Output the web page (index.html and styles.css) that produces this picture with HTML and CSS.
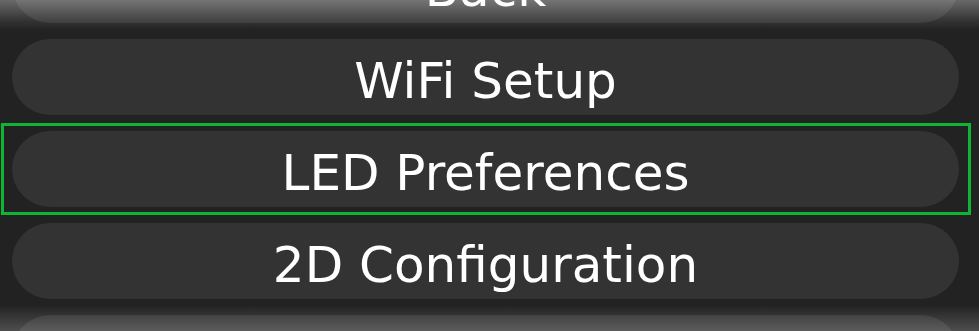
FILE: index.html
```html
<!DOCTYPE html>
<html>
<head>
<meta charset="utf-8">
<link rel="stylesheet" href="styles.css">
</head>
<body>
<div class="viewport">
  <ul class="menu">
    <li class="item"><div class="pill">Back</div></li>
    <li class="item"><div class="pill">WiFi Setup</div></li>
    <li class="item focused"><div class="pill">LED Preferences</div></li>
    <li class="item"><div class="pill">2D Configuration</div></li>
    <li class="item"><div class="pill">About</div></li>
  </ul>
  <div class="fade fade-top"></div>
  <div class="fade fade-bottom"></div>
</div>
</body>
</html>
```

FILE: styles.css
```css
html, body {
  margin: 0;
  padding: 0;
  background: #222222;
}

.viewport {
  position: relative;
  width: 979px;
  height: 331px;
  overflow: hidden;
  background: #222222;
}

.menu {
  list-style: none;
  margin: -61px 0 0 1px;
  padding: 0;
  width: 970px;
  display: flex;
  flex-direction: column;
}

.item {
  box-sizing: border-box;
  height: 92px;
  padding: 8px 12px 8px 11px;
  display: flex;
}

.item.focused {
  outline: 3px solid #0db533;
  outline-offset: -3px;
}

.pill {
  flex: 1;
  box-sizing: border-box;
  height: 76px;
  padding-top: 7px;
  border-radius: 38px;
  background: #333333;
  color: #ffffff;
  font-family: "DejaVu Sans", Verdana, sans-serif;
  font-size: 50px;
  display: flex;
  align-items: center;
  justify-content: center;
  white-space: nowrap;
}

.fade {
  position: absolute;
  left: 0;
  right: 0;
  pointer-events: none;
}

.fade-top {
  top: 0;
  height: 30px;
  background: linear-gradient(to bottom, rgba(255,255,255,0.32), rgba(255,255,255,0.08) 70%, rgba(255,255,255,0));
}

.fade-bottom {
  bottom: 0;
  height: 26px;
  background: linear-gradient(to top, rgba(255,255,255,0.2), rgba(255,255,255,0));
}
```
